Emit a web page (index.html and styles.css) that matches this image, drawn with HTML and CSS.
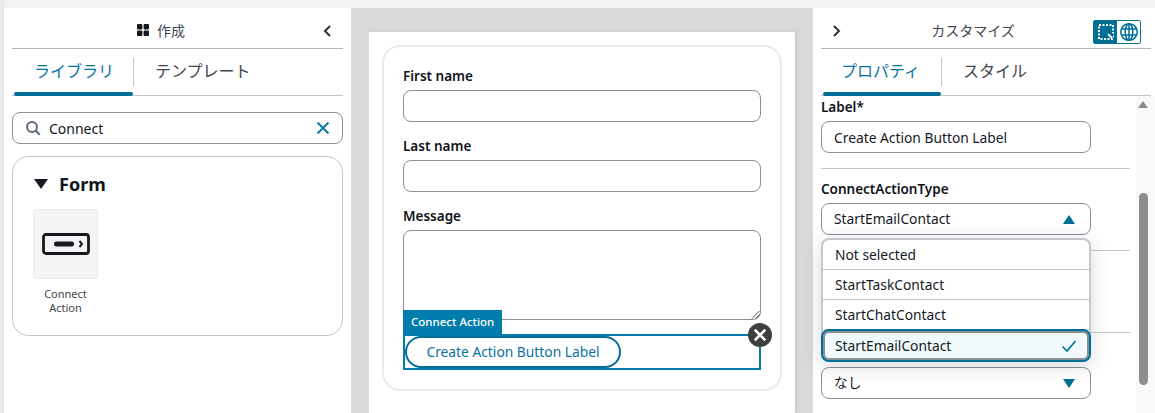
FILE: index.html
```html
<!DOCTYPE html>
<html lang="ja">
<head>
  <meta charset="UTF-8">
  <title>作成</title>
  <link rel="stylesheet" href="styles.css">
</head>
<body>
<div class="app">
  <aside class="panel panel-left">
    <div class="panel-head">
      <span class="head-title head-title-left">
        <svg class="grid-icon" width="12" height="12" viewBox="0 0 12 12"><rect width="5.4" height="5.4" rx="1"/><rect x="6.6" width="5.4" height="5.4" rx="1"/><rect y="6.6" width="5.4" height="5.4" rx="1"/><rect x="6.6" y="6.6" width="5.4" height="5.4" rx="1"/></svg>
        作成
      </span>
      <svg class="chevron chevron-right-pos" width="10" height="14" viewBox="0 0 10 14"><path d="M8 2 3 7l5 5"/></svg>
    </div>
    <div class="tabs">
      <div class="tab active tab-lib">ライブラリ</div>
      <div class="tab-sep"></div>
      <div class="tab">テンプレート</div>
    </div>
    <div class="search">
      <svg class="search-icon" width="16" height="16" viewBox="0 0 16 16"><circle cx="7" cy="7" r="5"/><path d="m10.8 10.8 4 4"/></svg>
      <span class="search-text">Connect</span>
      <svg class="clear-icon" width="14" height="14" viewBox="0 0 14 14"><path d="m1.5 1.5 11 11M12.5 1.500 1.500 12.500"/></svg>
    </div>
    <div class="lib-card">
      <div class="lib-title"><span class="tri-down"></span>Form</div>
      <div class="tile">
        <div class="tile-box">
          <svg width="48" height="22" viewBox="0 0 48 22"><rect x="1.500" y="1.500" width="45" height="19" rx="2.500" class="btn-outline"/><rect x="12" y="8.500" width="20" height="5" rx="2.500" class="btn-fill"/><path d="m37.500 8 2.500 3-2.500 3" class="btn-arrow"/></svg>
        </div>
        <div class="tile-label">Connect Action</div>
      </div>
    </div>
  </aside>

  <main class="stage">
    <div class="canvas">
      <div class="form-card">
        <div class="form-field">
          <label class="field-label">First name</label>
          <div class="text-input"></div>
        </div>
        <div class="form-field">
          <label class="field-label">Last name</label>
          <div class="text-input"></div>
        </div>
        <div class="form-field">
          <label class="field-label">Message</label>
          <div class="text-area">
            <svg class="resize-grip" width="9" height="9" viewBox="0 0 9 9"><path d="M8.500 1 1 8.500M8.500 4.500 4.500 8.500"/></svg>
          </div>
        </div>
        <div class="selected-box">
          <div class="selected-tag">Connect Action</div>
          <div class="action-pill">Create Action Button Label</div>
          <div class="remove-btn">
            <svg width="14" height="14" viewBox="0 0 12 12"><path d="m1.500 1.500 9 9M10.500 1.500l-9 9"/></svg>
          </div>
        </div>
      </div>
    </div>
  </main>

  <aside class="panel panel-right">
    <div class="panel-head">
      <svg class="chevron chevron-left-pos" width="10" height="14" viewBox="0 0 10 14"><path d="m2 2 5 5-5 5"/></svg>
      <span class="head-title head-title-right">カスタマイズ</span>
      <div class="view-toggle">
        <div class="toggle-btn toggle-on">
          <svg width="18" height="18" viewBox="0 0 18 18"><path d="M2 2h14v14H2z" class="dots"/><path d="m10 10 6 0 0 6z" class="corner"/><path d="m11 11 4 4" class="corner-line"/></svg>
        </div>
        <div class="toggle-btn">
          <svg width="20" height="20" viewBox="0 0 20 20"><circle cx="10" cy="10" r="8.300"/><ellipse cx="10" cy="10" rx="3.800" ry="8.300"/><path d="M10 1.700v16.600M2 7h16M2 13h16"/></svg>
        </div>
      </div>
    </div>
    <div class="tabs">
      <div class="tab active tab-prop">プロパティ</div>
      <div class="tab-sep"></div>
      <div class="tab">スタイル</div>
    </div>
    <div class="props">
      <div class="props-body">
        <div class="prop-label prop-label-first">Label*</div>
        <div class="prop-input prop-text">Create Action Button Label</div>
        <div class="divider divider-a"></div>
        <div class="prop-label">ConnectActionType</div>
        <div class="select-wrap">
          <div class="prop-input prop-select">StartEmailContact<span class="tri-up"></span></div>
          <ul class="dropdown">
            <li class="option">Not selected</li>
            <li class="option">StartTaskContact</li>
            <li class="option">StartChatContact</li>
            <li class="option option-selected">StartEmailContact
              <svg width="16" height="14" viewBox="0 0 16 14"><path d="m1.500 7.500 4.500 4.500 8.500-10"/></svg>
            </li>
          </ul>
        </div>
        <div class="divider divider-b"></div>
        <div class="divider divider-c"></div>
        <div class="prop-input prop-select">なし<span class="tri-down tri-teal"></span></div>
      </div>
      <div class="scrollbar">
        <span class="scroll-up"></span>
        <div class="scroll-thumb"></div>
      </div>
    </div>
  </aside>
</div>
</body>
</html>
```
FILE: styles.css
```css
* {
  box-sizing: border-box;
}

html, body {
  margin: 0;
  height: 100%;
  overflow: hidden;
}

body {
  background: #f3f3f3;
  color: #16191f;
  font-family: "Noto Sans", "Noto Sans CJK JP", sans-serif;
  font-size: 14px;
}

svg {
  display: block;
  flex: none;
}

.app {
  display: flex;
  height: 413px;
  padding-top: 8px;
  padding-left: 4px;
  background: linear-gradient(to right, #f0f0f0, #e2e2e2 4px, #f3f3f3 4px);
}

/* side panels */
.panel {
  flex: none;
  display: flex;
  flex-direction: column;
  background: #fff;
}

.panel-left {
  width: 347px;
  padding: 0 8px;
}

.panel-right {
  width: 342px;
  padding: 0 0 0 8px;
}

.panel-right .panel-head,
.panel-right .tabs {
  margin-right: 4px;
}

.panel-head {
  position: relative;
  flex: none;
  display: flex;
  align-items: center;
  justify-content: center;
  height: 41px;
  padding-top: 4px;
  border-bottom: 1px solid #b4b4bb;
}

.head-title {
  display: flex;
  align-items: center;
  gap: 8px;
  color: #414750;
}

.head-title-left {
  margin-right: 33px;
}

.head-title-right {
  margin-left: -26px;
}

.grid-icon {
  fill: #16191f;
}

.chevron {
  position: absolute;
  top: 16px;
  fill: none;
  stroke: #333;
  stroke-width: 2;
}

.chevron-right-pos {
  right: 11px;
}

.chevron-left-pos {
  left: 11px;
}

.tabs {
  flex: none;
  display: flex;
  align-items: flex-start;
  height: 47px;
  border-bottom: 1px solid #c6c6cd;
  font-size: 16px;
  color: #414750;
}

.tab {
  padding: 0 21px;
  height: 47px;
  line-height: 45px;
  white-space: nowrap;
}

.tab.active {
  position: relative;
  color: #0972a0;
}

.tab.active::after {
  content: "";
  position: absolute;
  left: 2px;
  right: 0;
  bottom: 0;
  height: 4px;
  border-radius: 2px;
  background: #006f95;
}

.tab-lib {
  width: 121px;
  padding-left: 22px;
}

.tab-prop {
  width: 120px;
  padding-left: 20px;
}

.tab-sep {
  width: 1px;
  height: 28px;
  margin-top: 9px;
  background: #c6c6cd;
}

/* library */
.search {
  flex: none;
  display: flex;
  align-items: center;
  height: 32px;
  margin-top: 16px;
  padding: 0 12px;
  border: 1px solid #8c8c94;
  border-radius: 8px;
}

.search-icon {
  fill: none;
  stroke: #5f6b7a;
  stroke-width: 2;
}

.search-text {
  flex: 1;
  margin-left: 8px;
  color: #0f141a;
}

.clear-icon {
  fill: none;
  stroke: #0b7a9e;
  stroke-width: 2;
}

.lib-card {
  flex: none;
  height: 180px;
  margin-top: 12px;
  padding: 15px 20px;
  border: 1px solid #c6c6cd;
  border-radius: 16px;
}

.lib-title {
  display: flex;
  align-items: center;
  gap: 11px;
  height: 24px;
  font-size: 18px;
  font-weight: 700;
  color: #0f141a;
}

.tri-down {
  display: inline-block;
  width: 0;
  height: 0;
  margin-left: 1px;
  border-left: 7px solid transparent;
  border-right: 7px solid transparent;
  border-top: 10px solid #16191f;
}

.tile {
  width: 65px;
  margin-top: 13px;
  text-align: center;
}

.tile-box {
  display: flex;
  align-items: center;
  justify-content: center;
  height: 70px;
  background: #f4f4f4;
  border: 1px solid #ececec;
  border-radius: 3px;
}

.btn-outline {
  fill: none;
  stroke: #16191f;
  stroke-width: 2.800;
}

.btn-fill {
  fill: #16191f;
}

.btn-arrow {
  fill: none;
  stroke: #16191f;
  stroke-width: 2;
}

.tile-label {
  margin-top: 8px;
  font-size: 11px;
  line-height: 14px;
  color: #414750;
}

/* canvas */
.stage {
  flex: none;
  width: 462px;
  padding: 24px 18px 0;
  background: #d9d9d9;
}

.canvas {
  width: 426px;
  height: 381px;
  padding: 13px;
  background: #fff;
  box-shadow: 2px 0 3px rgba(0, 0, 0, 0.08);
}

.form-card {
  height: 346px;
  padding: 19px 19px 0;
  border: 2px solid #e9ebed;
  border-radius: 18px;
}

.form-field {
  margin-bottom: 14px;
}

.field-label {
  display: block;
  height: 20px;
  margin-bottom: 4px;
  line-height: 20px;
  font-size: 13.500px;
  font-weight: 600;
  color: #0f141a;
}

.text-input {
  height: 32px;
  border: 1px solid #8c8c94;
  border-radius: 8px;
}

.text-area {
  position: relative;
  height: 90px;
  border: 1px solid #8c8c94;
  border-radius: 8px;
}

.resize-grip {
  position: absolute;
  right: 0;
  bottom: 0;
  fill: none;
  stroke: #555;
  stroke-width: 1;
}

.selected-box {
  position: relative;
  height: 36px;
  border: 2px solid #007dac;
}

.selected-tag {
  position: absolute;
  left: -2px;
  bottom: calc(100% + 2px);
  height: 24px;
  padding: 0 8px;
  line-height: 24px;
  font-size: 11.500px;
  font-weight: 500;
  color: #fff;
  background: #007dac;
  white-space: nowrap;
}

.action-pill {
  width: 216px;
  height: 32px;
  line-height: 28px;
  text-align: center;
  font-size: 13.800px;
  color: #0972a0;
  border: 2px solid #006f95;
  border-radius: 16px;
}

.remove-btn {
  position: absolute;
  top: -13px;
  right: -13px;
  display: flex;
  align-items: center;
  justify-content: center;
  width: 24px;
  height: 24px;
  border-radius: 50%;
  background: #3f3f3f;
}

.remove-btn path {
  fill: none;
  stroke: #fff;
  stroke-width: 2.200;
}

/* customize panel */
.view-toggle {
  position: absolute;
  top: 12px;
  right: 10px;
  display: flex;
  height: 24px;
  border: 1px solid #0b6f93;
  border-radius: 2px;
}

.toggle-btn {
  display: flex;
  align-items: center;
  justify-content: center;
  width: 23px;
  height: 22px;
  color: #006f95;
}

.toggle-btn circle,
.toggle-btn ellipse,
.toggle-btn > svg > path {
  fill: none;
  stroke: #006f95;
  stroke-width: 1.500;
}

.toggle-on {
  background: #006f95;
}

.toggle-on .dots {
  stroke: #fff;
  stroke-width: 2;
  stroke-dasharray: 2 1.500;
}

.toggle-on .corner {
  fill: #006f95;
  stroke: none;
}

.toggle-on .corner-line {
  stroke: #fff;
  stroke-width: 2;
}

.props {
  flex: 1;
  display: flex;
  min-height: 0;
}

.props-body {
  flex: none;
  width: 309px;
}

.prop-label {
  height: 20px;
  margin-top: 10px;
  line-height: 20px;
  font-size: 13.500px;
  font-weight: 600;
  color: #0f141a;
}

.prop-label-first {
  margin-top: 1px;
  margin-bottom: 4px;
}

.prop-input {
  width: 270px;
  height: 32px;
  padding: 0 12px;
  line-height: 30px;
  border: 1px solid #8c8c94;
  border-radius: 8px;
  font-size: 13.800px;
  color: #16191f;
}

.prop-text {
  padding-top: 1px;
}

.prop-select {
  display: flex;
  justify-content: space-between;
  align-items: center;
  padding-right: 15px;
}

.divider {
  height: 1px;
  background: #c6c6cd;
}

.divider-a {
  margin-top: 15px;
}

.divider-b {
  margin-top: 15px;
}

.divider-c {
  margin-top: 81px;
  margin-bottom: 34px;
}

.select-wrap {
  position: relative;
  margin-top: 4px;
}

.tri-up {
  width: 0;
  height: 0;
  border-left: 6px solid transparent;
  border-right: 6px solid transparent;
  border-bottom: 9px solid #006f95;
}

.tri-teal {
  border-left-width: 6px;
  border-right-width: 6px;
  border-top: 9px solid #006f95;
}

.dropdown {
  position: absolute;
  z-index: 2;
  top: 35px;
  left: 0;
  width: 270px;
  margin: 0;
  padding: 0;
  list-style: none;
  background: #fff;
  border: 2px solid #c6c6cd;
  border-bottom: 0;
  border-radius: 8px;
  box-shadow: 0 4px 20px rgba(0, 27, 50, 0.16);
}

.option {
  display: flex;
  align-items: center;
  justify-content: space-between;
  height: 30px;
  padding: 0 12px;
  border-bottom: 1px solid #c6c6cd;
  font-size: 13.800px;
  color: #16191f;
}

.option-selected {
  margin: -1px -2px 0;
  height: 33px;
  background: #f0fafc;
  border: 2px solid #006f95;
  border-radius: 8px;
  box-shadow: inset 0 0 0 2px #8c8c94;
}

.option-selected svg {
  fill: none;
  stroke: #006f95;
  stroke-width: 1.600;
}

.scrollbar {
  position: relative;
  flex: none;
  width: 19px;
  margin-left: 6px;
  background: #f9f9f9;
}

.scroll-up {
  position: absolute;
  top: 5px;
  left: 2px;
  width: 0;
  height: 0;
  border-left: 5px solid transparent;
  border-right: 5px solid transparent;
  border-bottom: 7px solid #8d8d8d;
}

.scroll-thumb {
  position: absolute;
  top: 97px;
  left: 3px;
  width: 9px;
  height: 192px;
  border-radius: 5px;
  background: #8d8d8d;
}
```
